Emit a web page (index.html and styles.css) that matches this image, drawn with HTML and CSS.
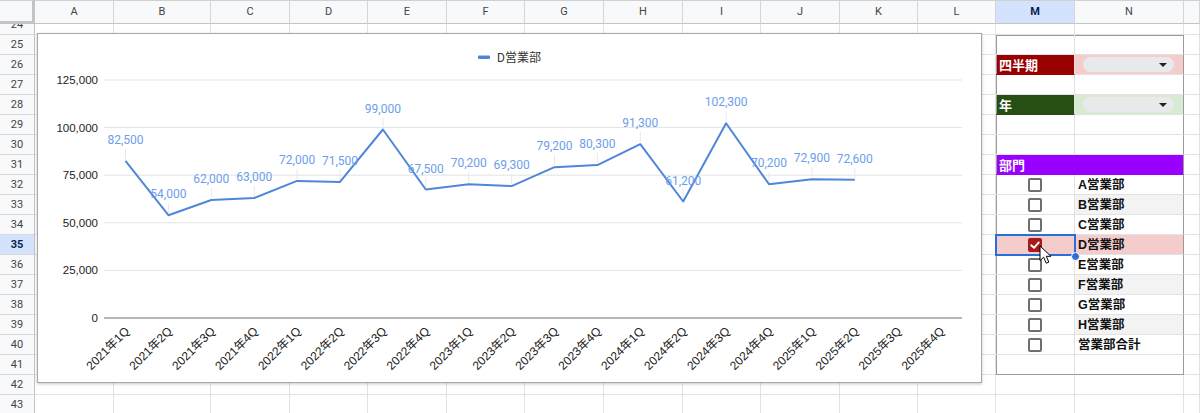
FILE: index.html
```html
<!DOCTYPE html>
<html lang="ja">
<head>
<meta charset="utf-8">
<title>Sheet</title>
<link rel="stylesheet" href="styles.css">
</head>
<body>
<div class="sheet">
  <div class="row head">
    <div class="corner"></div>
    <div class="ch">A</div><div class="ch">B</div><div class="ch">C</div><div class="ch">D</div><div class="ch">E</div><div class="ch">F</div><div class="ch">G</div><div class="ch">H</div><div class="ch">I</div><div class="ch">J</div><div class="ch">K</div><div class="ch">L</div><div class="ch sel">M</div><div class="ch">N</div><div class="ch"></div>
  </div>
  <div class="row partial">
    <div class="rh">24</div>
    <div class="c"></div><div class="c"></div><div class="c"></div><div class="c"></div><div class="c"></div><div class="c"></div><div class="c"></div><div class="c"></div><div class="c"></div><div class="c"></div><div class="c"></div><div class="c"></div><div class="c"></div><div class="c"></div><div class="c"></div>
  </div>
  <div class="row">
    <div class="rh">25</div>
    <div class="c"></div><div class="c"></div><div class="c"></div><div class="c"></div><div class="c"></div><div class="c"></div><div class="c"></div><div class="c"></div><div class="c"></div><div class="c"></div><div class="c"></div><div class="c"></div>
    <div class="c pm pt"></div><div class="c pn pt"></div><div class="c"></div>
  </div>
  <div class="row">
    <div class="rh">26</div>
    <div class="c"></div><div class="c"></div><div class="c"></div><div class="c"></div><div class="c"></div><div class="c"></div><div class="c"></div><div class="c"></div><div class="c"></div><div class="c"></div><div class="c"></div><div class="c"></div>
    <div class="c pm tag red">四半期</div><div class="c pn dd pinkbg"><span class="chip"><span class="caret"></span></span></div><div class="c"></div>
  </div>
  <div class="row">
    <div class="rh">27</div>
    <div class="c"></div><div class="c"></div><div class="c"></div><div class="c"></div><div class="c"></div><div class="c"></div><div class="c"></div><div class="c"></div><div class="c"></div><div class="c"></div><div class="c"></div><div class="c"></div>
    <div class="c pm"></div><div class="c pn"></div><div class="c"></div>
  </div>
  <div class="row">
    <div class="rh">28</div>
    <div class="c"></div><div class="c"></div><div class="c"></div><div class="c"></div><div class="c"></div><div class="c"></div><div class="c"></div><div class="c"></div><div class="c"></div><div class="c"></div><div class="c"></div><div class="c"></div>
    <div class="c pm tag green">年</div><div class="c pn dd greenbg"><span class="chip"><span class="caret"></span></span></div><div class="c"></div>
  </div>
  <div class="row">
    <div class="rh">29</div>
    <div class="c"></div><div class="c"></div><div class="c"></div><div class="c"></div><div class="c"></div><div class="c"></div><div class="c"></div><div class="c"></div><div class="c"></div><div class="c"></div><div class="c"></div><div class="c"></div>
    <div class="c pm"></div><div class="c pn"></div><div class="c"></div>
  </div>
  <div class="row">
    <div class="rh">30</div>
    <div class="c"></div><div class="c"></div><div class="c"></div><div class="c"></div><div class="c"></div><div class="c"></div><div class="c"></div><div class="c"></div><div class="c"></div><div class="c"></div><div class="c"></div><div class="c"></div>
    <div class="c pm"></div><div class="c pn"></div><div class="c"></div>
  </div>
  <div class="row">
    <div class="rh">31</div>
    <div class="c"></div><div class="c"></div><div class="c"></div><div class="c"></div><div class="c"></div><div class="c"></div><div class="c"></div><div class="c"></div><div class="c"></div><div class="c"></div><div class="c"></div><div class="c"></div>
    <div class="c pm tag purple merged">部門</div><div class="c pn purplebg"></div><div class="c"></div>
  </div>
  <div class="row">
    <div class="rh">32</div>
    <div class="c"></div><div class="c"></div><div class="c"></div><div class="c"></div><div class="c"></div><div class="c"></div><div class="c"></div><div class="c"></div><div class="c"></div><div class="c"></div><div class="c"></div><div class="c"></div>
    <div class="c pm cbc"><span class="cb"></span></div><div class="c pn lab">A営業部</div><div class="c"></div>
  </div>
  <div class="row">
    <div class="rh">33</div>
    <div class="c"></div><div class="c"></div><div class="c"></div><div class="c"></div><div class="c"></div><div class="c"></div><div class="c"></div><div class="c"></div><div class="c"></div><div class="c"></div><div class="c"></div><div class="c"></div>
    <div class="c pm cbc"><span class="cb"></span></div><div class="c pn lab alt">B営業部</div><div class="c"></div>
  </div>
  <div class="row">
    <div class="rh">34</div>
    <div class="c"></div><div class="c"></div><div class="c"></div><div class="c"></div><div class="c"></div><div class="c"></div><div class="c"></div><div class="c"></div><div class="c"></div><div class="c"></div><div class="c"></div><div class="c"></div>
    <div class="c pm cbc"><span class="cb"></span></div><div class="c pn lab">C営業部</div><div class="c"></div>
  </div>
  <div class="row">
    <div class="rh sel">35</div>
    <div class="c"></div><div class="c"></div><div class="c"></div><div class="c"></div><div class="c"></div><div class="c"></div><div class="c"></div><div class="c"></div><div class="c"></div><div class="c"></div><div class="c"></div><div class="c"></div>
    <div class="c pm cbc pinkbg active"><span class="cb on"><svg width="14" height="14" viewBox="0 0 14 14"><path d="M3.2 7.2 L6 9.8 L10.8 4.4" fill="none" stroke="#fff" stroke-width="1.9" stroke-linecap="round" stroke-linejoin="round"/></svg></span></div><div class="c pn lab pinkbg">D営業部</div><div class="c"></div>
  </div>
  <div class="row">
    <div class="rh">36</div>
    <div class="c"></div><div class="c"></div><div class="c"></div><div class="c"></div><div class="c"></div><div class="c"></div><div class="c"></div><div class="c"></div><div class="c"></div><div class="c"></div><div class="c"></div><div class="c"></div>
    <div class="c pm cbc"><span class="cb"></span></div><div class="c pn lab">E営業部</div><div class="c"></div>
  </div>
  <div class="row">
    <div class="rh">37</div>
    <div class="c"></div><div class="c"></div><div class="c"></div><div class="c"></div><div class="c"></div><div class="c"></div><div class="c"></div><div class="c"></div><div class="c"></div><div class="c"></div><div class="c"></div><div class="c"></div>
    <div class="c pm cbc"><span class="cb"></span></div><div class="c pn lab alt">F営業部</div><div class="c"></div>
  </div>
  <div class="row">
    <div class="rh">38</div>
    <div class="c"></div><div class="c"></div><div class="c"></div><div class="c"></div><div class="c"></div><div class="c"></div><div class="c"></div><div class="c"></div><div class="c"></div><div class="c"></div><div class="c"></div><div class="c"></div>
    <div class="c pm cbc"><span class="cb"></span></div><div class="c pn lab">G営業部</div><div class="c"></div>
  </div>
  <div class="row">
    <div class="rh">39</div>
    <div class="c"></div><div class="c"></div><div class="c"></div><div class="c"></div><div class="c"></div><div class="c"></div><div class="c"></div><div class="c"></div><div class="c"></div><div class="c"></div><div class="c"></div><div class="c"></div>
    <div class="c pm cbc"><span class="cb"></span></div><div class="c pn lab alt">H営業部</div><div class="c"></div>
  </div>
  <div class="row">
    <div class="rh">40</div>
    <div class="c"></div><div class="c"></div><div class="c"></div><div class="c"></div><div class="c"></div><div class="c"></div><div class="c"></div><div class="c"></div><div class="c"></div><div class="c"></div><div class="c"></div><div class="c"></div>
    <div class="c pm cbc"><span class="cb"></span></div><div class="c pn lab">営業部合計</div><div class="c"></div>
  </div>
  <div class="row">
    <div class="rh">41</div>
    <div class="c"></div><div class="c"></div><div class="c"></div><div class="c"></div><div class="c"></div><div class="c"></div><div class="c"></div><div class="c"></div><div class="c"></div><div class="c"></div><div class="c"></div><div class="c"></div>
    <div class="c pm pb"></div><div class="c pn pb"></div><div class="c"></div>
  </div>
  <div class="row">
    <div class="rh">42</div>
    <div class="c"></div><div class="c"></div><div class="c"></div><div class="c"></div><div class="c"></div><div class="c"></div><div class="c"></div><div class="c"></div><div class="c"></div><div class="c"></div><div class="c"></div><div class="c"></div><div class="c"></div><div class="c"></div><div class="c"></div>
  </div>
  <div class="row">
    <div class="rh">43</div>
    <div class="c"></div><div class="c"></div><div class="c"></div><div class="c"></div><div class="c"></div><div class="c"></div><div class="c"></div><div class="c"></div><div class="c"></div><div class="c"></div><div class="c"></div><div class="c"></div><div class="c"></div><div class="c"></div><div class="c"></div>
  </div>

  <div class="chart">
    <svg width="943" height="348" viewBox="38 34 943 348">
      <g class="legend">
        <rect x="478" y="55.5" width="12" height="3.5" rx="1" fill="#5086d8"/>
        <text class="lg" x="497" y="61.5">D営業部</text>
      </g>
      <g stroke="#e3e3e3" stroke-width="1">
        <line x1="104" y1="80" x2="962" y2="80"/>
        <line x1="104" y1="127.6" x2="962" y2="127.6"/>
        <line x1="104" y1="175.2" x2="962" y2="175.2"/>
        <line x1="104" y1="222.8" x2="962" y2="222.8"/>
        <line x1="104" y1="270.4" x2="962" y2="270.4"/>
      </g>
      <line x1="104" y1="318" x2="962" y2="318" stroke="#9e9e9e" stroke-width="1.5"/>
      <g class="ax" text-anchor="end">
        <text x="98" y="84">125,000</text>
        <text x="98" y="131.6">100,000</text>
        <text x="98" y="179.2">75,000</text>
        <text x="98" y="226.8">50,000</text>
        <text x="98" y="274.4">25,000</text>
        <text x="98" y="322">0</text>
      </g>
      <g stroke="#e8e8e8" stroke-width="1">
        <line x1="125.5" y1="148.9" x2="125.5" y2="159"/>
        <line x1="168.4" y1="203.2" x2="168.4" y2="213"/>
        <line x1="211.3" y1="188" x2="211.3" y2="198"/>
        <line x1="254.2" y1="186" x2="254.2" y2="196"/>
        <line x1="297.1" y1="168.9" x2="297.1" y2="179"/>
        <line x1="340" y1="169.9" x2="340" y2="180"/>
        <line x1="382.9" y1="117.5" x2="382.9" y2="127.5"/>
        <line x1="425.8" y1="177.5" x2="425.8" y2="187.5"/>
        <line x1="468.7" y1="172.3" x2="468.7" y2="182.3"/>
        <line x1="511.6" y1="174.1" x2="511.6" y2="184.1"/>
        <line x1="554.5" y1="155.2" x2="554.5" y2="165.2"/>
        <line x1="597.4" y1="153.1" x2="597.4" y2="163.1"/>
        <line x1="640.3" y1="132.2" x2="640.3" y2="142.2"/>
        <line x1="683.2" y1="189.5" x2="683.2" y2="199.5"/>
        <line x1="726.1" y1="111.2" x2="726.1" y2="121.2"/>
        <line x1="769" y1="172.3" x2="769" y2="182.3"/>
        <line x1="811.9" y1="167.2" x2="811.9" y2="177.2"/>
        <line x1="854.8" y1="167.8" x2="854.8" y2="177.8"/>
      </g>
      <polyline fill="none" stroke="#5086d8" stroke-width="2" stroke-linejoin="round" points="125.5,160.9 168.4,215.2 211.3,200 254.2,198 297.1,180.9 340,181.9 382.9,129.5 425.8,189.5 468.7,184.3 511.6,186.1 554.5,167.2 597.4,165.1 640.3,144.2 683.2,201.5 726.1,123.2 769,184.3 811.9,179.2 854.8,179.8"/>
      <g class="dl" text-anchor="middle">
        <text x="125.5" y="143.9">82,500</text>
        <text x="168.4" y="198.2">54,000</text>
        <text x="211.3" y="183">62,000</text>
        <text x="254.2" y="181">63,000</text>
        <text x="297.1" y="163.9">72,000</text>
        <text x="340" y="164.9">71,500</text>
        <text x="382.9" y="112.5">99,000</text>
        <text x="425.8" y="172.5">67,500</text>
        <text x="468.7" y="167.3">70,200</text>
        <text x="511.6" y="169.1">69,300</text>
        <text x="554.5" y="150.2">79,200</text>
        <text x="597.4" y="148.1">80,300</text>
        <text x="640.3" y="127.2">91,300</text>
        <text x="683.2" y="184.5">61,200</text>
        <text x="726.1" y="106.2">102,300</text>
        <text x="769" y="167.3">70,200</text>
        <text x="811.9" y="162.2">72,900</text>
        <text x="854.8" y="162.8">72,600</text>
      </g>
      <g class="ax xl" text-anchor="end">
        <text x="130" y="332" transform="rotate(-45 130 332)">2021年1Q</text>
        <text x="172.9" y="332" transform="rotate(-45 172.9 332)">2021年2Q</text>
        <text x="215.8" y="332" transform="rotate(-45 215.8 332)">2021年3Q</text>
        <text x="258.7" y="332" transform="rotate(-45 258.7 332)">2021年4Q</text>
        <text x="301.6" y="332" transform="rotate(-45 301.6 332)">2022年1Q</text>
        <text x="344.5" y="332" transform="rotate(-45 344.5 332)">2022年2Q</text>
        <text x="387.4" y="332" transform="rotate(-45 387.4 332)">2022年3Q</text>
        <text x="430.3" y="332" transform="rotate(-45 430.3 332)">2022年4Q</text>
        <text x="473.2" y="332" transform="rotate(-45 473.2 332)">2023年1Q</text>
        <text x="516.1" y="332" transform="rotate(-45 516.1 332)">2023年2Q</text>
        <text x="559" y="332" transform="rotate(-45 559 332)">2023年3Q</text>
        <text x="601.9" y="332" transform="rotate(-45 601.9 332)">2023年4Q</text>
        <text x="644.8" y="332" transform="rotate(-45 644.8 332)">2024年1Q</text>
        <text x="687.7" y="332" transform="rotate(-45 687.7 332)">2024年2Q</text>
        <text x="730.6" y="332" transform="rotate(-45 730.6 332)">2024年3Q</text>
        <text x="773.5" y="332" transform="rotate(-45 773.5 332)">2024年4Q</text>
        <text x="816.4" y="332" transform="rotate(-45 816.4 332)">2025年1Q</text>
        <text x="859.3" y="332" transform="rotate(-45 859.3 332)">2025年2Q</text>
        <text x="902.2" y="332" transform="rotate(-45 902.2 332)">2025年3Q</text>
        <text x="945.1" y="332" transform="rotate(-45 945.1 332)">2025年4Q</text>
      </g>
    </svg>
  </div>

  <span class="handle"></span>
  <svg class="cursor" width="15" height="21" viewBox="0 0 15 21"><path d="M1 1 L1 15.5 L4.6 12.2 L7.2 18.2 L9.8 17.1 L7.3 11.3 L12 11.3 Z" fill="#fff" stroke="#000" stroke-width="1" stroke-linejoin="round"/></svg>
</div>
</body>
</html>
```
FILE: styles.css
```css
* {
  box-sizing: border-box;
  margin: 0;
  padding: 0;
}

body {
  margin: 0;
  width: 1200px;
  height: 413px;
  overflow: hidden;
  background: #fff;
  font-family: Roboto, "Noto Sans CJK JP", sans-serif;
}

.sheet {
  position: relative;
  width: 1200px;
}

.row {
  display: grid;
  grid-template-columns: 35px 79px 97px 79px 78px 79px 78px 79px 79px 78px 79px 78px 78px 79px 109px 16px;
  height: 20px;
}

.row.head {
  height: 24px;
}

.row.partial {
  height: 11px;
}

.c {
  border-right: 1px solid #e2e2e2;
  border-bottom: 1px solid #e2e2e2;
  overflow: hidden;
  white-space: nowrap;
}

.corner {
  background: #f8f9fa;
  border-right: 3px solid #c4c4c4;
  border-bottom: 3px solid #c4c4c4;
  border-top: 1px solid #d0d0d0;
}

.ch {
  background: #f8f9fa;
  border-top: 1px solid #d0d0d0;
  border-right: 1px solid #d6d6d6;
  border-bottom: 1px solid #c4c4c4;
  font-size: 11px;
  color: #444;
  text-align: center;
  line-height: 22px;
}

.ch.sel {
  background: #d3e3fd;
  color: #0b1f4f;
  font-weight: bold;
}

.rh {
  background: #f8f9fa;
  border-right: 1px solid #c4c4c4;
  border-bottom: 1px solid #dadada;
  font-size: 11px;
  color: #444;
  text-align: center;
  line-height: 19px;
  overflow: hidden;
}

.rh.sel {
  background: #d3e3fd;
  color: #0b1f4f;
  font-weight: bold;
}

.partial .rh {
  line-height: 2px;
}

/* panel frame */
.pm {
  box-shadow: inset 1px 0 #9a9a9a;
}

.pm.pt {
  box-shadow: inset 1px 1px #9a9a9a;
}

.pn {
  border-right-color: #9a9a9a;
}

.pn.pt {
  box-shadow: inset 0 1px #9a9a9a;
}

.pb {
  border-bottom-color: #9a9a9a;
}

.tag {
  color: #fff;
  font-weight: bold;
  font-size: 13px;
  line-height: 19px;
  padding: 1px 0 0 3px;
  font-family: "Liberation Sans", "Noto Sans CJK JP", sans-serif;
}

.red {
  background: #990000;
  border-bottom-color: #990000;
}

.green {
  background: #274e13;
  border-bottom-color: #274e13;
}

.purple,
.purplebg {
  background: #9900ff;
  border-bottom-color: #9900ff;
}

.merged {
  border-right-color: #9900ff;
}

.pinkbg {
  background: #f4cccc;
}

.greenbg {
  background: #d9ead3;
}

.dd {
  display: flex;
  align-items: center;
  padding: 0 9px 0 8px;
}

.chip {
  flex: 1;
  height: 15px;
  border-radius: 8px;
  background: #e8e9eb;
  display: flex;
  align-items: center;
  justify-content: flex-end;
  padding-right: 7px;
}

.caret {
  width: 0;
  height: 0;
  border-left: 4px solid transparent;
  border-right: 4px solid transparent;
  border-top: 4px solid #202124;
}

.cbc {
  display: flex;
  align-items: center;
  justify-content: center;
}

.cb {
  display: block;
  width: 14px;
  height: 14px;
  border: 2px solid #6f6f6f;
  border-radius: 2px;
  background: #fff;
}

.cb.on {
  border: none;
  background: #a8191c;
  position: relative;
  z-index: 1;
}

.cb.on svg {
  display: block;
}

.active {
  outline: 2px solid #2a6fd6;
  outline-offset: -1px;
  position: relative;
  z-index: 2;
}

.lab {
  font-family: "Liberation Sans", "Noto Sans CJK JP", sans-serif;
  font-weight: bold;
  font-size: 12.5px;
  line-height: 19px;
  padding: 1px 0 0 3px;
  color: #111;
}

.alt {
  background: #f3f3f3;
}

/* chart object floating over the grid */
.chart {
  position: absolute;
  left: 37px;
  top: 33px;
  width: 945px;
  height: 350px;
  background: #fff;
  border: 1px solid #a8a8a8;
  box-shadow: 0 1px 3px rgba(0, 0, 0, 0.22);
}

.chart svg {
  display: block;
}

.ax {
  font-family: "Liberation Sans", "Noto Sans CJK JP", sans-serif;
  font-size: 11.5px;
  fill: #222;
}

.xl {
  font-size: 12px;
}

.dl {
  font-family: Roboto, sans-serif;
  font-size: 12px;
  fill: #6d9eeb;
}

.lg {
  font-family: Roboto, "Noto Sans CJK JP", sans-serif;
  font-size: 12px;
  fill: #333;
}

.handle {
  position: absolute;
  left: 1071px;
  top: 252px;
  width: 9px;
  height: 9px;
  border-radius: 50%;
  background: #2a6fd6;
  border: 1px solid #fff;
  z-index: 3;
}

.cursor {
  position: absolute;
  left: 1039px;
  top: 245px;
  z-index: 4;
}
```
